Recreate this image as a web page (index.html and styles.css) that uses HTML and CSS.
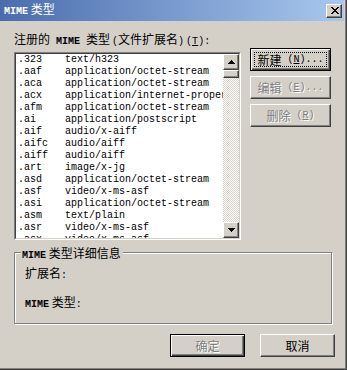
FILE: index.html
```html
<!DOCTYPE html>
<html lang="zh-CN">
<head>
<meta charset="utf-8">
<title>MIME 类型</title>
<link rel="stylesheet" href="styles.css">
</head>
<body>
<div class="window">
  <div class="titlebar">
    <span class="title"><span class="a b">MIME</span> 类型</span>
    <div class="close raised"><svg width="8" height="7" viewBox="0 0 8 7" shape-rendering="crispEdges"><path d="M0 0h2v1h-2zM6 0h2v1h-2zM1 1h2v1h-2zM5 1h2v1h-2zM2 2h4v1h-4zM3 3h2v1h-2zM2 4h4v1h-4zM1 5h2v1h-2zM5 5h2v1h-2zM0 6h2v1h-2zM6 6h2v1h-2z" fill="#000"/></svg></div>
  </div>
  <div class="body">
    <div class="main">
      <div class="left">
        <div class="label">注册的<span class="a b"> MIME </span>类型<span class="a par">(</span>文件扩展名<span class="a">)<span class="par">(<u>T</u>):</span></span></div>
        <div class="list">
          <div class="list-in">
            <div class="rows">
              <div class="row"><span class="ext">.323</span><span>text/h323</span></div>
              <div class="row"><span class="ext">.aaf</span><span>application/octet-stream</span></div>
              <div class="row"><span class="ext">.aca</span><span>application/octet-stream</span></div>
              <div class="row"><span class="ext">.acx</span><span>application/internet-property-stream</span></div>
              <div class="row"><span class="ext">.afm</span><span>application/octet-stream</span></div>
              <div class="row"><span class="ext">.ai</span><span>application/postscript</span></div>
              <div class="row"><span class="ext">.aif</span><span>audio/x-aiff</span></div>
              <div class="row"><span class="ext">.aifc</span><span>audio/aiff</span></div>
              <div class="row"><span class="ext">.aiff</span><span>audio/aiff</span></div>
              <div class="row"><span class="ext">.art</span><span>image/x-jg</span></div>
              <div class="row"><span class="ext">.asd</span><span>application/octet-stream</span></div>
              <div class="row"><span class="ext">.asf</span><span>video/x-ms-asf</span></div>
              <div class="row"><span class="ext">.asi</span><span>application/octet-stream</span></div>
              <div class="row"><span class="ext">.asm</span><span>text/plain</span></div>
              <div class="row"><span class="ext">.asr</span><span>video/x-ms-asf</span></div>
              <div class="row"><span class="ext">.asx</span><span>video/x-ms-asf</span></div>
            </div>
            <div class="vscroll">
              <div class="sbtn raised"><svg width="7" height="4" viewBox="0 0 7 4" shape-rendering="crispEdges"><path d="M3 0h1v1h1v1h1v1h1v1H0V3h1V2h1V1h1z" fill="#000"/></svg></div>
              <div class="thumb raised"></div>
              <div class="track"></div>
              <div class="sbtn raised"><svg width="7" height="4" viewBox="0 0 7 4" shape-rendering="crispEdges"><path d="M0 0h7v1h-1v1h-1v1h-1v1h-1V3h-1V2h-1V1H0z" fill="#000"/></svg></div>
            </div>
          </div>
        </div>
      </div>
      <div class="side">
        <div class="btn default focus">新建<span class="a key">(<u>N</u>)...</span></div>
        <div class="btn raised dis">编辑<span class="a key">(<u>E</u>)...</span></div>
        <div class="btn raised dis">删除<span class="a key">(<u>R</u>)</span></div>
      </div>
    </div>
    <div class="group">
      <div class="legend"><span class="a b">MIME</span> 类型详细信息</div>
      <div class="field f1">扩展名<span class="a">:</span></div>
      <div class="field f2"><span class="a b">MIME</span> 类型<span class="a">:</span></div>
    </div>
    <div class="footer">
      <div class="btn wide default dis">确定</div>
      <div class="btn wide raised">取消</div>
    </div>
  </div>
</div>
</body>
</html>
```

FILE: styles.css
```css
* { box-sizing: border-box; }

body {
  margin: 0;
  font-family: "Noto Sans CJK SC", sans-serif;
  font-size: 12px;
  color: #000;
}

.a { font-family: "Liberation Mono", monospace; font-size: 10px; }
.b { font-weight: bold; }
.par { padding-left: 2px; }
.key { padding-left: 6px; }

.window {
  width: 347px;
  height: 370px;
  background: #d4d0c8;
  border-right: 1px solid #404040;
  border-bottom: 1px solid #404040;
  box-shadow: inset -1px -1px #808080;
  padding: 0 2px 2px 0;
  display: flex;
  flex-direction: column;
}

.titlebar {
  height: 21px;
  flex: none;
  display: flex;
  align-items: center;
  justify-content: space-between;
  padding: 0 2px 0 4px;
  background: linear-gradient(90deg, #4a6cad, #a8c8ee);
  color: #fff;
}

.title { line-height: 14px; white-space: nowrap; }

.raised {
  background: #d4d0c8;
  border: 1px solid;
  border-color: #fff #404040 #404040 #fff;
  box-shadow: inset -1px -1px #808080;
}

.close {
  width: 16px;
  height: 14px;
  display: flex;
  align-items: center;
  justify-content: center;
  padding-left: 1px;
}
.close svg, .sbtn svg { display: block; }

.body {
  flex: 1;
  padding: 11px 9px 0 14px;
}

.main { display: flex; }

.left { width: 227px; flex: none; }

.label {
  height: 14px;
  line-height: 14px;
  white-space: nowrap;
  margin-bottom: 6px;
}

.list {
  height: 188px;
  border: 1px solid;
  border-color: #808080 #fff #fff #808080;
}

.list-in {
  height: 100%;
  border: 1px solid;
  border-color: #404040 #d4d0c8 #d4d0c8 #404040;
  background: #fff;
  display: flex;
}

.rows {
  flex: 1;
  min-width: 0;
  overflow: hidden;
  padding-left: 2px;
}

.row {
  height: 12px;
  font: 10px/12px "Liberation Mono", monospace;
  white-space: nowrap;
  display: flex;
}

.ext { width: 47px; flex: none; }

.vscroll {
  width: 16px;
  flex: none;
  display: flex;
  flex-direction: column;
}

.sbtn {
  height: 16px;
  flex: none;
  display: flex;
  align-items: center;
  justify-content: center;
}

.thumb { height: 8px; flex: none; }

.track {
  flex: 1;
  background: repeating-conic-gradient(#d4d0c8 0 25%, #fff 0 50%) 0 0 / 2px 2px;
}

.side {
  width: 81px;
  flex: none;
  margin-left: 9px;
  padding-top: 16px;
  display: flex;
  flex-direction: column;
  gap: 5px;
}

.btn {
  height: 23px;
  display: flex;
  align-items: center;
  justify-content: center;
  line-height: 14px;
  white-space: nowrap;
}

.default {
  background: #d4d0c8;
  border: 1px solid #000;
  box-shadow: inset 1px 1px #fff, inset -1px -1px #404040, inset -2px -2px #808080;
}

.focus {
  outline: 1px dotted #000;
  outline-offset: -5px;
}

.dis {
  color: #808080;
  text-shadow: 1px 1px #fff;
}

.group {
  margin-top: 12px;
  width: 318px;
  height: 72px;
  border: 1px solid #808080;
  box-shadow: inset 1px 1px #fff, 1px 1px #fff;
  padding-left: 10px;
  display: flex;
  flex-direction: column;
  align-items: flex-start;
}

.legend {
  height: 14px;
  line-height: 14px;
  margin: -7px 0 0 -4px;
  padding: 0 2px 0 1px;
  background: #d4d0c8;
  white-space: nowrap;
}

.field {
  height: 14px;
  line-height: 14px;
  white-space: nowrap;
}
.f1 { margin-top: 6px; }
.f2 { margin-top: 15px; }

.footer {
  margin-top: 10px;
  display: flex;
  justify-content: flex-end;
  gap: 15px;
}

.wide { width: 75px; }
```
